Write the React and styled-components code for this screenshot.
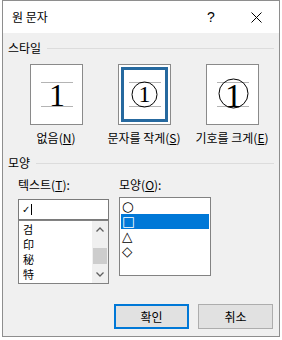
import React from "react";
import styled, { createGlobalStyle } from "styled-components";

const Global = createGlobalStyle`
  html, body { margin: 0; background: #fff; }
  body {
    font-family: "Noto Sans CJK KR", "Noto Sans", sans-serif;
    font-size: 12px;
    color: #000;
  }
`;

const Window = styled.div`
  box-sizing: border-box;
  width: 278px;
  height: 337px;
  margin-left: 2px;
  border: 1px solid #8e8e8e;
  background: #f0f0f0;
  display: flex;
  flex-direction: column;
`;

const TitleBar = styled.div`
  height: 32px;
  background: #fff;
  display: flex;
  align-items: center;
  padding-left: 9px;
`;

const Title = styled.div`
  flex: 1;
  line-height: 16px;
`;

const TitleButton = styled.div`
  width: ${(p) => p.$w}px;
  height: 32px;
  display: flex;
  align-items: center;
  justify-content: center;
  font-family: "Liberation Sans", sans-serif;
  font-size: 14px;
`;

const Body = styled.div`
  flex: 1;
  display: flex;
  flex-direction: column;
  padding: 0 5px 7px 5px;
`;

const SectionHeader = styled.div`
  display: flex;
  align-items: center;
  gap: 6px;
  height: 14px;
  line-height: 14px;
  margin-top: ${(p) => p.$top}px;
`;

const Rule = styled.div`
  flex: 1;
  height: 1px;
  background: #dcdcdc;
`;

const StyleRow = styled.div`
  display: grid;
  grid-template-columns: repeat(3, 88px);
  margin: 9px 0 0 4px;
`;

const Option = styled.div`
  display: flex;
  flex-direction: column;
  align-items: center;
`;

const PreviewBox = styled.div`
  box-sizing: border-box;
  width: 53px;
  height: 61px;
  border: 1px solid #8a8a8a;
  background: #fff;
  box-shadow: ${(p) =>
    p.$selected ? "inset 0 0 0 2px #fff, inset 0 0 0 5px #26699f" : "none"};
  svg { display: block; }
`;

const OptionLabel = styled.div`
  margin-top: 5px;
  line-height: 16px;
  white-space: nowrap;
`;

const Fields = styled.div`
  display: grid;
  grid-template-columns: 91px 92px;
  column-gap: 10px;
  margin: 7px 0 0 10px;
`;

const Column = styled.div`
  display: flex;
  flex-direction: column;
`;

const FieldLabel = styled.div`
  line-height: 16px;
  white-space: nowrap;
`;

const TextInput = styled.div`
  box-sizing: border-box;
  margin-top: 6px;
  height: 21px;
  border: 1px solid #7a7a7a;
  background: #fff;
  display: flex;
  align-items: center;
  padding-left: 3px;
`;

const Check = styled.span`
  font-family: "DejaVu Sans", sans-serif;
  font-size: 10px;
  line-height: 12px;
`;

const Caret = styled.span`
  width: 1px;
  height: 11px;
  margin-left: 1px;
  background: #000;
`;

const ListBox = styled.div`
  box-sizing: border-box;
  margin-top: ${(p) => p.$top}px;
  height: ${(p) => p.$h}px;
  border: 1px solid #828282;
  background: #fff;
  display: flex;
  padding: 1px 0 0 1px;
`;

const Items = styled.div`
  flex: 1;
  display: flex;
  flex-direction: column;
  overflow: hidden;
`;

const Item = styled.div`
  height: 15px;
  line-height: 15px;
  font-size: 11px;
  padding-left: ${(p) => p.$pad}px;
  margin-right: ${(p) => (p.$selected ? 1 : 0)}px;
  background: ${(p) => (p.$selected ? "#0078d7" : "transparent")};
  color: ${(p) => (p.$selected ? "#fff" : "#000")};
  white-space: nowrap;
`;

const ShapeGlyph = styled.span`
  font-family: "DejaVu Sans", sans-serif;
  font-size: 13.5px;
`;

const ScrollBar = styled.div`
  width: 16px;
  margin: -1px 0 0 0;
  background: #f0f0f0;
  display: flex;
  flex-direction: column;
`;

const ScrollArrow = styled.div`
  height: 17px;
  display: flex;
  align-items: center;
  justify-content: center;
`;

const Track = styled.div`
  flex: 1;
`;

const Thumb = styled.div`
  margin: ${(p) => p.$offset}px 1px 0 1px;
  height: ${(p) => p.$size}px;
  background: #cdcdcd;
`;

const ButtonRow = styled.div`
  margin-top: auto;
  display: flex;
  justify-content: flex-end;
  gap: 9px;
  padding-right: 1px;
`;

const Button = styled.div`
  box-sizing: border-box;
  width: 75px;
  height: 25px;
  display: flex;
  align-items: center;
  justify-content: center;
  background: #e1e1e1;
  border: ${(p) => (p.$default ? "2px solid #0078d7" : "1px solid #adadad")};
`;

const Lines = () => (
  <>
    <line x1="10" y1="17.5" x2="42" y2="17.5" stroke="#b4b4b4" />
    <line x1="10" y1="41.5" x2="42" y2="41.5" stroke="#b4b4b4" />
  </>
);

const Digit = ({ x, y, size }) => (
  <text x={x} y={y} textAnchor="middle" fontFamily="Liberation Serif, serif" fontSize={size}>
    1
  </text>
);

const previews = [
  {
    label: ["없음(", "N", ")"],
    art: (
      <>
        <Lines />
        <Digit x={26} y={41} size={32} />
      </>
    ),
  },
  {
    label: ["문자를 작게(", "S", ")"],
    selected: true,
    art: (
      <>
        <Lines />
        <circle cx="25.5" cy="29.5" r="12.5" fill="none" stroke="#000" />
        <Digit x={25.5} y={37} size={24} />
      </>
    ),
  },
  {
    label: ["기호를 크게(", "E", ")"],
    art: (
      <>
        <Lines />
        <circle cx="26.5" cy="28.5" r="14.5" fill="none" stroke="#000" />
        <Digit x={26.5} y={42} size={34} />
      </>
    ),
  },
];

const chars = ["검", "印", "秘", "特"];
const shapes = ["○", "□", "△", "◇"];

const Chevron = ({ down }) => (
  <svg width="8" height="5" viewBox="0 0 8 5">
    <path
      d={down ? "M0.5 0.5 L4 4 L7.5 0.5" : "M0.5 4.5 L4 1 L7.5 4.5"}
      fill="none"
      stroke="#606060"
      strokeWidth="1.3"
    />
  </svg>
);

const Mnemonic = ({ parts }) => (
  <>
    {parts[0]}
    <u>{parts[1]}</u>
    {parts[2]}
  </>
);

export default function App() {
  return (
    <>
      <Global />
      <Window>
        <TitleBar>
          <Title>원 문자</Title>
          <TitleButton $w={44}>?</TitleButton>
          <TitleButton $w={46}>
            <svg width="11" height="11" viewBox="0 0 11 11">
              <path d="M0.5 0.5 L10.5 10.5 M10.5 0.5 L0.5 10.5" stroke="#000" strokeWidth="1" />
            </svg>
          </TitleButton>
        </TitleBar>
        <Body>
          <SectionHeader $top={8}>
            스타일
            <Rule />
          </SectionHeader>
          <StyleRow>
            {previews.map((p, i) => (
              <Option key={i}>
                <PreviewBox $selected={p.selected}>
                  <svg width="51" height="59" viewBox="0 0 51 59">
                    {p.art}
                  </svg>
                </PreviewBox>
                <OptionLabel>
                  <Mnemonic parts={p.label} />
                </OptionLabel>
              </Option>
            ))}
          </StyleRow>
          <SectionHeader $top={10}>
            모양
            <Rule />
          </SectionHeader>
          <Fields>
            <Column>
              <FieldLabel>
                <Mnemonic parts={["텍스트(", "T", "):"]} />
              </FieldLabel>
              <TextInput>
                <Check>✓</Check>
                <Caret />
              </TextInput>
              <ListBox $top={0} $h={64}>
                <Items>
                  {chars.map((c) => (
                    <Item key={c} $pad={3}>
                      {c}
                    </Item>
                  ))}
                </Items>
                <ScrollBar>
                  <ScrollArrow>
                    <Chevron />
                  </ScrollArrow>
                  <Track>
                    <Thumb $offset={10} $size={16} />
                  </Track>
                  <ScrollArrow>
                    <Chevron down />
                  </ScrollArrow>
                </ScrollBar>
              </ListBox>
            </Column>
            <Column>
              <FieldLabel>
                <Mnemonic parts={["모양(", "O", "):"]} />
              </FieldLabel>
              <ListBox $top={4} $h={79}>
                <Items>
                  {shapes.map((s, i) => (
                    <Item key={s} $pad={1} $selected={i === 1}>
                      <ShapeGlyph>{s}</ShapeGlyph>
                    </Item>
                  ))}
                </Items>
              </ListBox>
            </Column>
          </Fields>
          <ButtonRow>
            <Button $default>확인</Button>
            <Button>취소</Button>
          </ButtonRow>
        </Body>
      </Window>
    </>
  );
}
